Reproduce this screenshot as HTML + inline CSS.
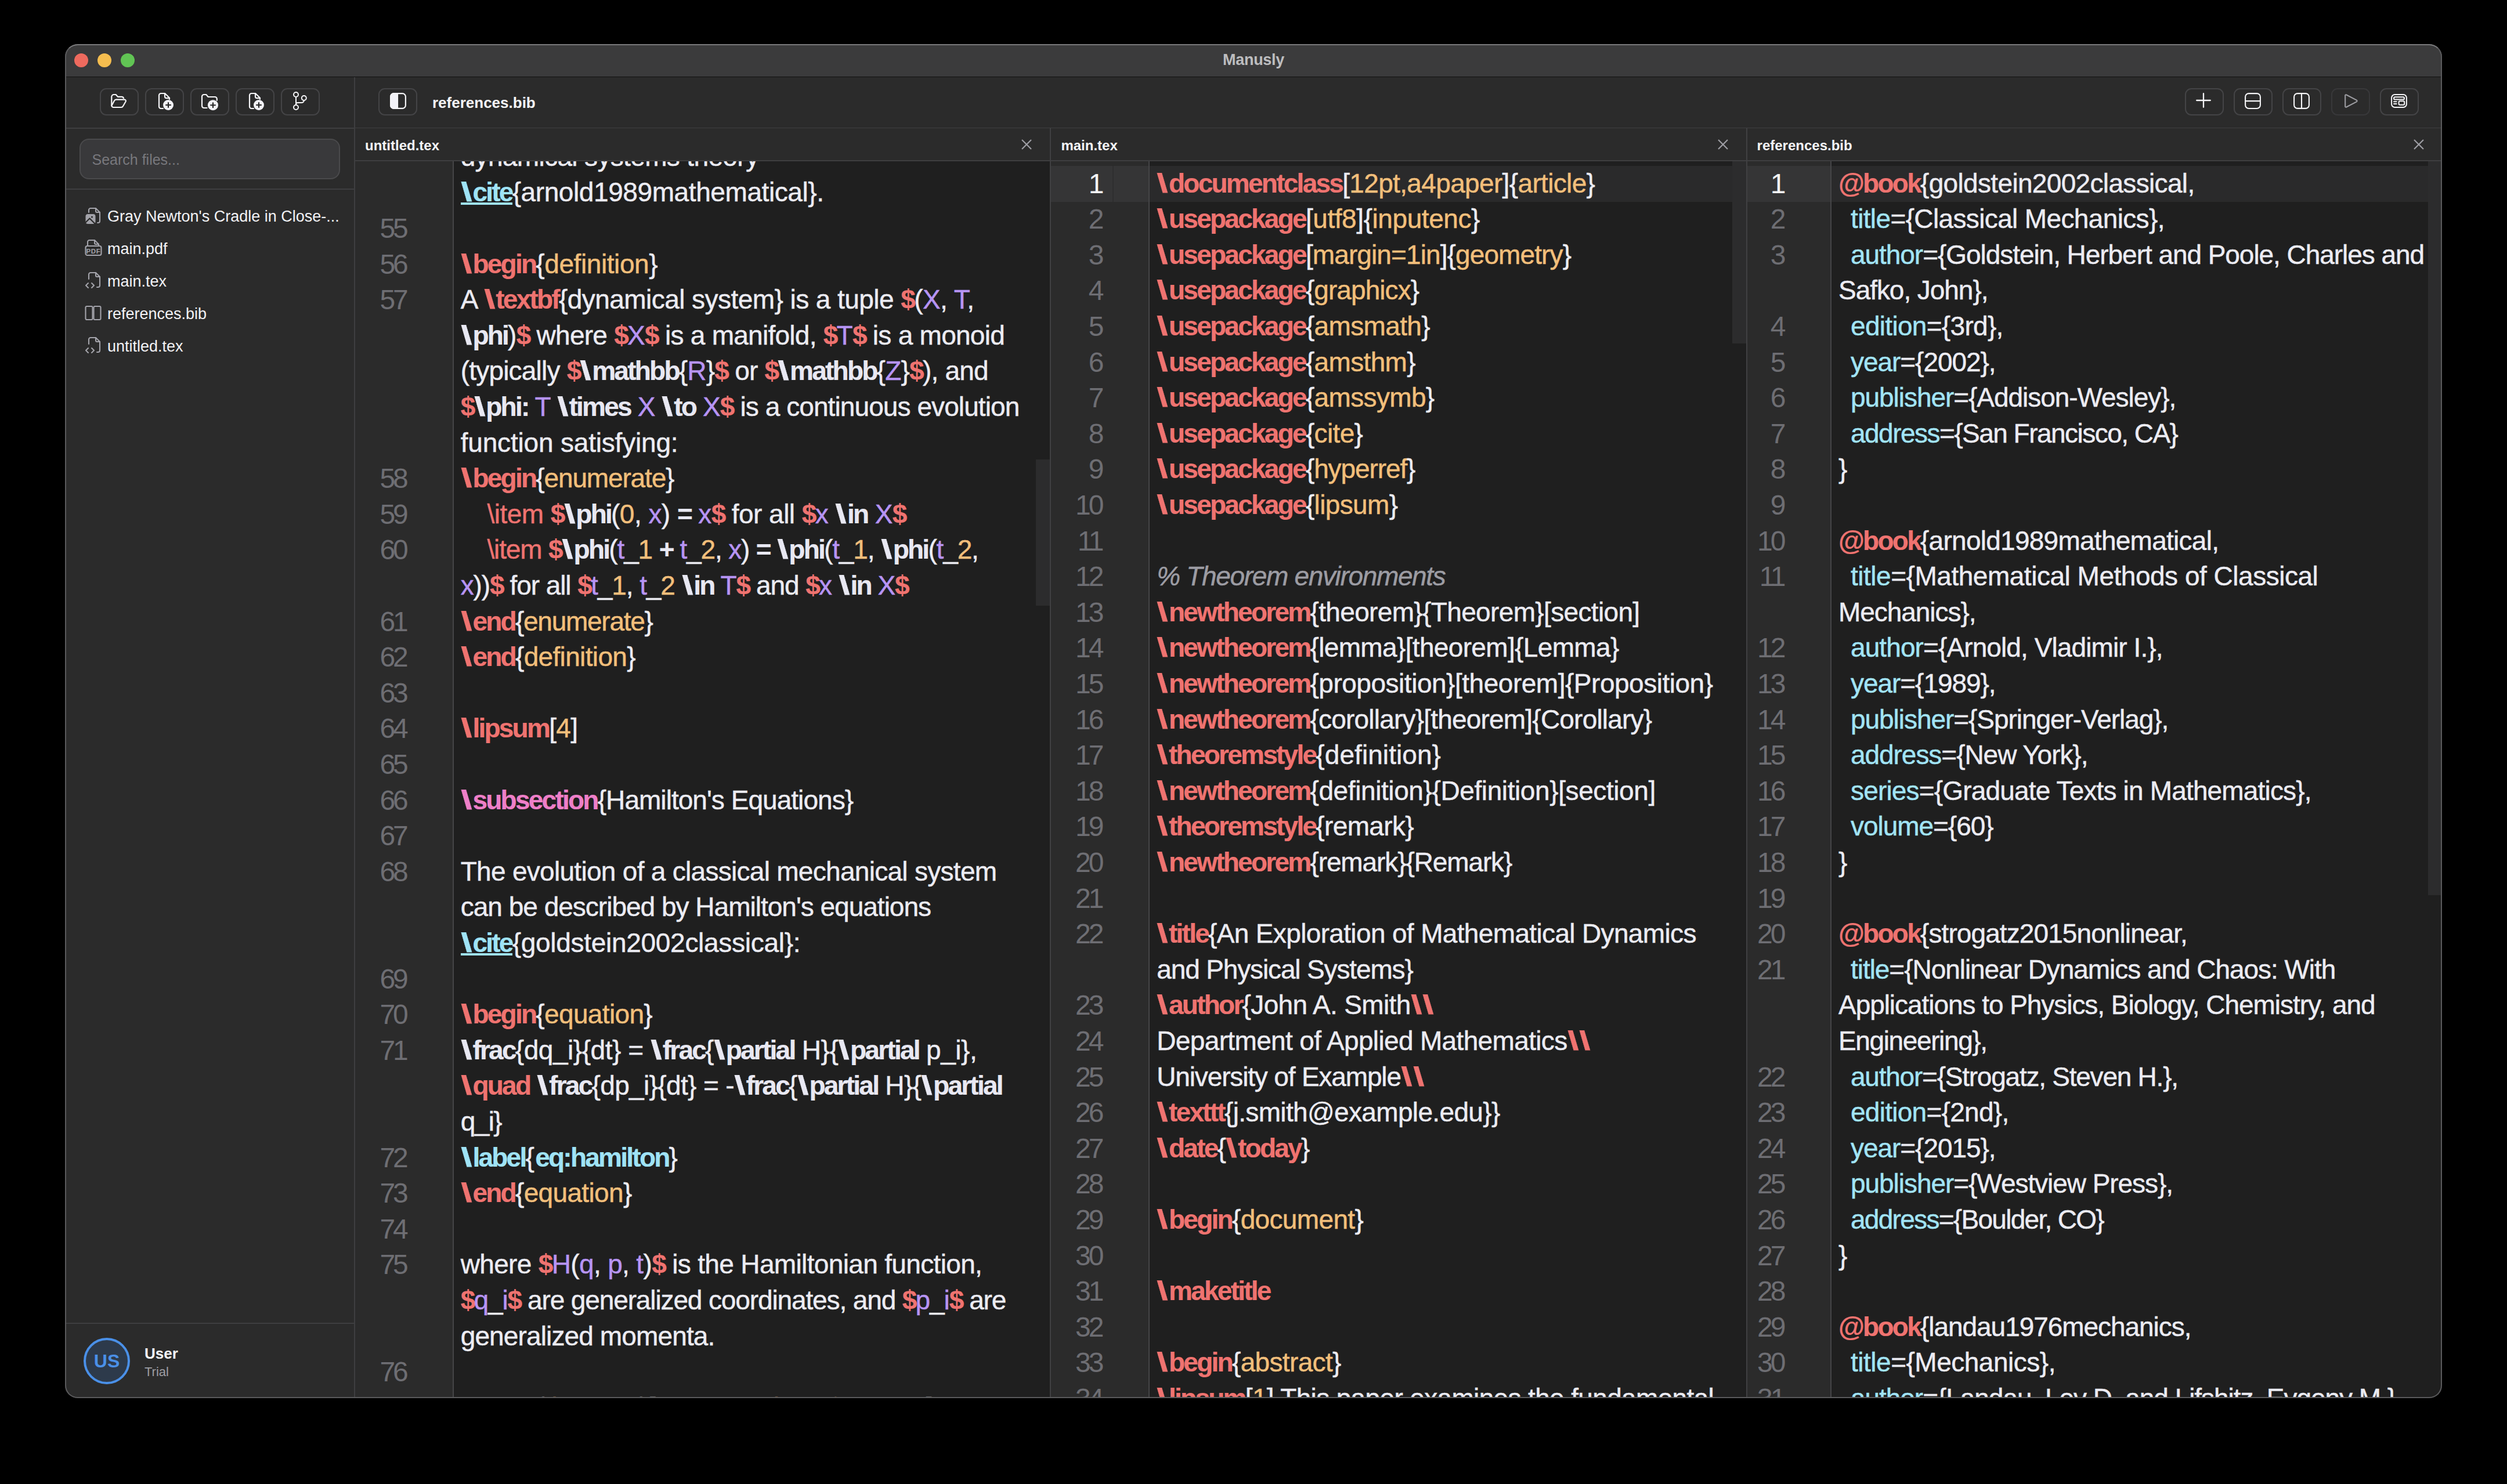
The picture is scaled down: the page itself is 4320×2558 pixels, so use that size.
<!DOCTYPE html>
<html><head><meta charset="utf-8"><title>Manusly</title>
<style>
*{box-sizing:border-box;margin:0;padding:0}
html,body{width:4320px;height:2558px;background:#000;overflow:hidden;font-family:"Liberation Sans",sans-serif}
#win{position:absolute;left:112px;top:76px;width:4096px;height:2334px;border-radius:22px;overflow:hidden;background:#2b2b2b}
#winborder{position:absolute;left:112px;top:76px;width:4096px;height:2334px;border-radius:22px;border:2px solid #5a5a5c;border-top-color:#7a7a7c;pointer-events:none;z-index:10}
.titlebar{position:absolute;left:0;top:0;width:4096px;height:56.8px;background:#3b3b3c;border-bottom:1.5px solid #111;z-index:5}
.tl{position:absolute;top:16px;width:24px;height:24px;border-radius:50%}
.apptitle{position:absolute;left:0;width:4096px;top:11.5px;text-align:center;font-size:27px;letter-spacing:-0.3px;font-weight:bold;color:#bdbdbf;line-height:30px}
.sidebar{position:absolute;left:0;top:56px;width:500px;height:2278px;background:#2b2b2b;border-right:2px solid #3e3e40}
.hline{position:absolute;height:2px;background:#3e3e40}
.btn{position:absolute;width:67px;height:47px;border:2px solid #444446;border-radius:11px}
.btn.dim{border-color:#38383a}
.search{position:absolute;left:25px;top:107px;width:449px;height:70px;border-radius:16px;background:#39393b;border:2px solid #4a4a4c;font-size:25px;color:#78787d;padding-left:19.5px;line-height:69.5px}
.file{position:absolute;left:34px;height:32px;width:440px}
.file span{position:absolute;left:39px;top:0;font-size:27px;color:#f2f2f5;line-height:32px;white-space:pre}
.avatar{position:absolute;left:32px;top:2174px;width:80px;height:80px;border-radius:50%;border:4px solid #4a90e8;background:#2d3a4b;color:#4a90e8;font-weight:bold;font-size:32px;text-align:center;line-height:72px}
.uname{position:absolute;left:137px;font-weight:bold;font-size:26px;color:#f5f5f7;line-height:30px}
.utrial{position:absolute;left:137px;font-size:22px;color:#9d9da3;line-height:25px}
.main{position:absolute;left:500px;top:56px;width:3596px;height:2277px}
.maintitle{position:absolute;left:133px;top:29.5px;font-size:26px;font-weight:bold;color:#f5f5f7;line-height:30px}
.pane{position:absolute;top:145px;height:2189px}
.tabbar{position:absolute;left:0;top:0;width:100%;height:57px;background:#2b2b2b;border-bottom:2px solid #3e3e40}
.tabtitle{position:absolute;top:14.5px;font-size:24px;font-weight:bold;color:#f5f5f7;line-height:30px}
.close{position:absolute;top:18px}
.editor{position:absolute;left:0;top:57px;width:100%;height:2132px;background:#1f1f1f;overflow:hidden}
.gutter{position:absolute;left:0;top:0;height:100%;background:#2b2b2b}
.gborder{position:absolute;top:0;width:1.5px;height:100%;background:#454547}
.hl-g{position:absolute;left:0;height:62px;background:#353536}
.hl-c{position:absolute;height:62px;background:#2a2a2b}
.thumb{position:absolute;background:#2c2c2d}
.num{position:absolute;font-size:48px;line-height:61.6px;color:#6e6e73;letter-spacing:-4px;text-align:right;white-space:pre}
.num.act{color:#f5f5f7}
.ln{position:absolute;font-size:46px;line-height:61.6px;white-space:pre;color:#ececf3;letter-spacing:-0.65px}
.p3 .ln{letter-spacing:-1.05px}
.ln span{-webkit-text-stroke:0.45px currentColor}
.ln .c,.ln .wb,.ln .cy,.ln .cyu,.ln .pk{-webkit-text-stroke:0.2px currentColor}
.ln .c{color:#ef7370;font-weight:bold;letter-spacing:-2.75px}
.ln .cr{color:#ef7370}
.ln .a{color:#f2bf7b}
.ln .w{color:#ececf3}
.ln .wb{color:#e8e8f2;font-weight:bold;letter-spacing:-2.75px}
.ln .p{color:#b794f4}
.ln .cy{color:#9fe3f6;font-weight:bold;letter-spacing:-2.75px}
.ln .cyu{color:#9fe3f6;font-weight:bold;letter-spacing:-2.75px;background:linear-gradient(#9fe3f6,#9fe3f6) no-repeat;background-size:100% 4px;background-position:0 calc(100% - 4px)}
.ln .cyr{color:#a2e4f6}
.ln .pk{color:#ee7fc8;font-weight:bold;letter-spacing:-2.75px}
.ln .cm{color:#9c9ca3;font-style:italic}
.ln .ind4{display:inline-block;width:45.8px}
.ln i.bs{display:inline-block;font-style:normal;transform:scaleX(1.55);transform-origin:0 0;width:20.7px;letter-spacing:0}
.ln .ind2{display:inline-block;width:21px}
.sep{position:absolute;top:145px;width:2px;height:2189px;background:#404042}
</style></head><body>
<div id="win">
<div class="titlebar"><div class="tl" style="left:16px;background:#ee6a5e"></div><div class="tl" style="left:56px;background:#f5bd4f"></div><div class="tl" style="left:96px;background:#61c454"></div><div class="apptitle">Manusly</div></div><div class="sidebar"><div class="btn" style="left:59.5px;top:20.0px"></div><div class="btn" style="left:137.5px;top:20.0px"></div><div class="btn" style="left:215.5px;top:20.0px"></div><div class="btn" style="left:293.5px;top:20.0px"></div><div class="btn" style="left:371.5px;top:20.0px"></div><div class="hline" style="left:0;top:88px;width:500px"></div><div class="search">Search files...</div><div class="hline" style="left:0;top:193px;width:500px"></div><div class="file" style="top:225.0px"><svg width="32" height="32" viewBox="0 0 32 32" style="position:absolute;left:0.0px;top:-1.5px" fill="none" stroke="#a3a3aa" stroke-width="2.1" stroke-linecap="round" stroke-linejoin="round"><path d="M7 10V6a3 3 0 0 1 3-3h9l7 7v15a3 3 0 0 1-3 3h-1"/><path d="M19 3v5a2 2 0 0 0 2 2h5"/><rect x="1.5" y="13" width="17" height="17" rx="4" fill="#a3a3aa" stroke="none"/><path d="M1 28l7.5-7.5 9 9" stroke="#2b2b2b" stroke-width="2.2"/><circle cx="12.5" cy="18" r="1.6" fill="#2b2b2b" stroke="none"/></svg><span>Gray Newton&#x27;s Cradle in Close-...</span></div><div class="file" style="top:280.9px"><svg width="32" height="32" viewBox="0 0 32 32" style="position:absolute;left:0.0px;top:-1.5px" fill="none" stroke="#a3a3aa" stroke-width="2.1" stroke-linecap="round" stroke-linejoin="round"><path d="M5 13V6a3 3 0 0 1 3-3h9l7 7v3"/><path d="M17 3v5a2 2 0 0 0 2 2h5"/><rect x="1.5" y="13" width="27" height="16" rx="3"/><text x="15" y="25.5" font-family="Liberation Sans" font-weight="bold" font-size="11.5" fill="#a3a3aa" stroke="none" text-anchor="middle" letter-spacing="0.6">PDF</text></svg><span>main.pdf</span></div><div class="file" style="top:336.8px"><svg width="32" height="32" viewBox="0 0 32 32" style="position:absolute;left:0.0px;top:-1.5px" fill="none" stroke="#a3a3aa" stroke-width="2.1" stroke-linecap="round" stroke-linejoin="round"><path d="M7 14V6a3 3 0 0 1 3-3h9l7 7v15a3 3 0 0 1-3 3h-2"/><path d="M19 3v5a2 2 0 0 0 2 2h5"/><path d="M6 21l-4 4 4 4M12 21l4 4-4 4"/></svg><span>main.tex</span></div><div class="file" style="top:392.7px"><svg width="32" height="32" viewBox="0 0 32 32" style="position:absolute;left:0.0px;top:-1.5px" fill="none" stroke="#a3a3aa" stroke-width="2.1" stroke-linecap="round" stroke-linejoin="round"><rect x="1.5" y="5" width="12" height="23" rx="2"/><rect x="15.5" y="5" width="12" height="23" rx="2"/></svg><span>references.bib</span></div><div class="file" style="top:448.6px"><svg width="32" height="32" viewBox="0 0 32 32" style="position:absolute;left:0.0px;top:-1.5px" fill="none" stroke="#a3a3aa" stroke-width="2.1" stroke-linecap="round" stroke-linejoin="round"><path d="M7 14V6a3 3 0 0 1 3-3h9l7 7v15a3 3 0 0 1-3 3h-2"/><path d="M19 3v5a2 2 0 0 0 2 2h5"/><path d="M6 21l-4 4 4 4M12 21l4 4-4 4"/></svg><span>untitled.tex</span></div><div class="hline" style="left:0;top:2148px;width:500px"></div><div class="avatar">US</div><div class="uname" style="top:2186px">User</div><div class="utrial" style="top:2219.5px">Trial</div></div><div class="main"><div class="btn" style="left:40.2px;top:20.0px"></div><div class="maintitle">references.bib</div><div class="btn" style="left:3152.6px;top:20.0px"></div><div class="btn" style="left:3236.6px;top:20.0px"></div><div class="btn" style="left:3320.6px;top:20.0px"></div><div class="btn dim" style="left:3404.6px;top:20.0px"></div><div class="btn" style="left:3488.6px;top:20.0px"></div><div class="hline" style="left:0;top:88px;width:3596px"></div></div><svg width="30" height="28" viewBox="0 0 30 28" style="position:absolute;left:78.00px;top:84.00px" fill="none" stroke="#f5f5f7" stroke-width="2.20" stroke-linecap="round" stroke-linejoin="round"><path d="M2.3 21.5V7A4 4 0 0 1 6.3 3H9.6L13 6.8H19.8A3.4 3.4 0 0 1 23 9.2"/><path d="M2.6 21.8L7 13.6A3.6 3.6 0 0 1 10.2 11.6H24.6A2.3 2.3 0 0 1 26.6 15L22 23A3.6 3.6 0 0 1 18.9 25H5.6A3.3 3.3 0 0 1 2.3 21.7"/></svg><svg width="30" height="32" viewBox="0 0 30 32" style="position:absolute;left:160.00px;top:83.00px" fill="none" stroke="#f5f5f7" stroke-width="2.20" stroke-linecap="round" stroke-linejoin="round"><path d="M9 28H5.2A3.2 3.2 0 0 1 2 24.8V5.2A3.2 3.2 0 0 1 5.2 2H12.2L20 9.8V12"/><path d="M12 2.2V7.6A2.6 2.6 0 0 0 14.6 10.2H20"/><circle cx="18" cy="22" r="9" fill="#f2f2f7" stroke="none"/><path d="M18 17.2V26.8M13.2 22H22.8" stroke="#232323" stroke-width="2.1" stroke-linecap="butt"/></svg><svg width="32" height="32" viewBox="0 0 32 32" style="position:absolute;left:234.00px;top:84.00px" fill="none" stroke="#f5f5f7" stroke-width="2.20" stroke-linecap="round" stroke-linejoin="round"><path d="M10.5 26H5.5A3.5 3.5 0 0 1 2 22.5V6.5A3.5 3.5 0 0 1 5.5 3H9.2L12.7 7H24.3A3.5 3.5 0 0 1 27.8 10.5V13"/><circle cx="21" cy="21.2" r="9" fill="#f2f2f7" stroke="none"/><path d="M21 16.4V26M16.2 21.2H25.8" stroke="#232323" stroke-width="2.1" stroke-linecap="butt"/></svg><svg width="30" height="32" viewBox="0 0 30 32" style="position:absolute;left:316.00px;top:83.00px" fill="none" stroke="#f5f5f7" stroke-width="2.20" stroke-linecap="round" stroke-linejoin="round"><path d="M9 28H5.2A3.2 3.2 0 0 1 2 24.8V5.2A3.2 3.2 0 0 1 5.2 2H12.2L20 9.8V12"/><path d="M12 2.2V7.6A2.6 2.6 0 0 0 14.6 10.2H20"/><circle cx="18" cy="22" r="9" fill="#f2f2f7" stroke="none"/><path d="M18 17.2V26.8M13.2 22H22.8" stroke="#232323" stroke-width="2.1" stroke-linecap="butt"/></svg><svg width="30" height="34" viewBox="0 0 30 34" style="position:absolute;left:388.00px;top:82.00px" fill="none" stroke="#f5f5f7" stroke-width="2.00" stroke-linecap="round" stroke-linejoin="round"><circle cx="10" cy="5" r="4"/><circle cx="10" cy="27" r="4"/><circle cx="23.8" cy="11" r="4"/><path d="M10 9V23"/><path d="M10 21.5C10 19.8 11.2 19 13 19H19.5C21.8 19 23.8 17.5 23.8 15"/></svg><svg width="30" height="30" viewBox="0 0 30 30" style="position:absolute;left:560.00px;top:84.00px" fill="none" stroke="#f5f5f7" stroke-width="2.20" stroke-linecap="round" stroke-linejoin="round"><rect x="1.1" y="1.1" width="25.8" height="25.8" rx="5.5"/><path d="M6.6 1.1H13V26.9H6.6A5.5 5.5 0 0 1 1.1 21.4V6.6A5.5 5.5 0 0 1 6.6 1.1Z" fill="#f2f2f7"/></svg><svg width="28" height="28" viewBox="0 0 28 28" style="position:absolute;left:3671.60px;top:83.60px" fill="none" stroke="#f5f5f7" stroke-width="2.30" stroke-linecap="round" stroke-linejoin="round"><path d="M13 1.2V24.8M1.2 13H24.8"/></svg><svg width="30" height="30" viewBox="0 0 30 30" style="position:absolute;left:3756.00px;top:84.00px" fill="none" stroke="#f5f5f7" stroke-width="2.10" stroke-linecap="round" stroke-linejoin="round"><rect x="1.1" y="1.1" width="25.8" height="25.9" rx="6"/><path d="M1.1 14.1H26.9"/></svg><svg width="30" height="30" viewBox="0 0 30 30" style="position:absolute;left:3840.00px;top:84.00px" fill="none" stroke="#f5f5f7" stroke-width="2.10" stroke-linecap="round" stroke-linejoin="round"><rect x="1.1" y="1.1" width="25.8" height="25.8" rx="6"/><path d="M14 1.1V26.9"/></svg><svg width="26" height="26" viewBox="0 0 26 26" style="position:absolute;left:3928.00px;top:86.00px" fill="none" stroke="#9c9ca1" stroke-width="2.10" stroke-linecap="round" stroke-linejoin="round"><path d="M3.3 1.5L20.8 10.6A1.6 1.6 0 0 1 20.8 13.4L3.3 22.5A1.3 1.3 0 0 1 1.2 21.4V2.6A1.3 1.3 0 0 1 3.3 1.5Z"/></svg><svg width="30" height="26" viewBox="0 0 30 26" style="position:absolute;left:4008.00px;top:86.00px" fill="none" stroke="#f5f5f7" stroke-width="2.00" stroke-linecap="round" stroke-linejoin="round"><rect x="1.1" y="1.1" width="25.8" height="21.8" rx="5.5"/><rect x="5" y="5.2" width="18" height="4.4" rx="2.2"/><path d="M5 13.2H9.6M5 17H9.6"/><rect x="13.6" y="12.2" width="9.6" height="6.6" rx="1.8"/></svg><div class="pane p1" style="left:500.0px;width:1197.0px"><div class="tabbar"><span class="tabtitle" style="left:17.0px">untitled.tex</span><svg class="close" style="left:1147.0px" width="20" height="20" viewBox="0 0 20 20"><path d="M2 2L18 18M18 2L2 18" stroke="#9d9da3" stroke-width="2.2" fill="none"/></svg></div><div class="editor"><div class="gutter" style="width:168.0px"></div><div class="gborder" style="left:168.0px"></div><div class="thumb" style="left:1173.0px;top:514.0px;height:252.0px;width:24.0px"></div><div class="ln" style="top:-38.20px;left:181.7px"><span class="w">dynamical systems theory</span></div><div class="ln" style="top:23.40px;left:181.7px;letter-spacing:-0.410px"><span class="cyu"><i class="bs">\</i>cite</span><span class="w">{arnold1989mathematical}.</span></div><div class="num" style="top:85.00px;right:1109.2px">55</div><div class="num" style="top:146.60px;right:1109.2px">56</div><div class="ln" style="top:146.60px;left:181.7px;letter-spacing:-0.417px"><span class="c"><i class="bs">\</i>begin</span><span class="w">{</span><span class="a">definition</span><span class="w">}</span></div><div class="num" style="top:208.20px;right:1109.2px">57</div><div class="ln" style="top:208.20px;left:181.7px;letter-spacing:-0.553px"><span class="w">A </span><span class="c"><i class="bs">\</i>textbf</span><span class="w">{dynamical system} is a tuple </span><span class="c">$</span><span class="w">(</span><span class="p">X</span><span class="w">, </span><span class="p">T</span><span class="w">,</span></div><div class="ln" style="top:269.80px;left:181.7px;letter-spacing:-0.734px"><span class="wb"><i class="bs">\</i>phi</span><span class="w">)</span><span class="c">$</span><span class="w"> where </span><span class="c">$</span><span class="p">X</span><span class="c">$</span><span class="w"> is a manifold, </span><span class="c">$</span><span class="p">T</span><span class="c">$</span><span class="w"> is a monoid</span></div><div class="ln" style="top:331.40px;left:181.7px;letter-spacing:-0.798px"><span class="w">(typically </span><span class="c">$</span><span class="wb"><i class="bs">\</i>mathbb</span><span class="w">{</span><span class="p">R</span><span class="w">}</span><span class="c">$</span><span class="w"> or </span><span class="c">$</span><span class="wb"><i class="bs">\</i>mathbb</span><span class="w">{</span><span class="p">Z</span><span class="w">}</span><span class="c">$</span><span class="w">), and</span></div><div class="ln" style="top:393.00px;left:181.7px;letter-spacing:-0.915px"><span class="c">$</span><span class="wb"><i class="bs">\</i>phi:</span><span class="w"> </span><span class="p">T</span><span class="w"> </span><span class="wb"><i class="bs">\</i>times</span><span class="w"> </span><span class="p">X</span><span class="w"> </span><span class="wb"><i class="bs">\</i>to</span><span class="w"> </span><span class="p">X</span><span class="c">$</span><span class="w"> is a continuous evolution</span></div><div class="ln" style="top:454.60px;left:181.7px;letter-spacing:-0.185px"><span class="w">function satisfying:</span></div><div class="num" style="top:516.20px;right:1109.2px">58</div><div class="ln" style="top:516.20px;left:181.7px;letter-spacing:-1.150px"><span class="c"><i class="bs">\</i>begin</span><span class="w">{</span><span class="a">enumerate</span><span class="w">}</span></div><div class="num" style="top:577.80px;right:1109.2px">59</div><div class="ln" style="top:577.80px;left:181.7px;letter-spacing:-0.536px"><span class="ind4"></span><span class="cr">\item</span><span class="w"> </span><span class="c">$</span><span class="wb"><i class="bs">\</i>phi</span><span class="w">(</span><span class="a">0</span><span class="w">, </span><span class="p">x</span><span class="w">) </span><span class="wb">=</span><span class="w"> </span><span class="p">x</span><span class="c">$</span><span class="w"> for all </span><span class="c">$</span><span class="p">x</span><span class="w"> </span><span class="wb"><i class="bs">\</i>in</span><span class="w"> </span><span class="p">X</span><span class="c">$</span></div><div class="num" style="top:639.40px;right:1109.2px">60</div><div class="ln" style="top:639.40px;left:181.7px;letter-spacing:-1.153px"><span class="ind4"></span><span class="cr">\item</span><span class="w"> </span><span class="c">$</span><span class="wb"><i class="bs">\</i>phi</span><span class="w">(</span><span class="p">t</span><span class="w">_</span><span class="a">1</span><span class="w"> </span><span class="wb">+</span><span class="w"> </span><span class="p">t</span><span class="w">_</span><span class="a">2</span><span class="w">, </span><span class="p">x</span><span class="w">) </span><span class="wb">=</span><span class="w"> </span><span class="wb"><i class="bs">\</i>phi</span><span class="w">(</span><span class="p">t</span><span class="w">_</span><span class="a">1</span><span class="w">, </span><span class="wb"><i class="bs">\</i>phi</span><span class="w">(</span><span class="p">t</span><span class="w">_</span><span class="a">2</span><span class="w">,</span></div><div class="ln" style="top:701.00px;left:181.7px;letter-spacing:-1.087px"><span class="p">x</span><span class="w">))</span><span class="c">$</span><span class="w"> for all </span><span class="c">$</span><span class="p">t</span><span class="w">_</span><span class="a">1</span><span class="w">, </span><span class="p">t</span><span class="w">_</span><span class="a">2</span><span class="w"> </span><span class="wb"><i class="bs">\</i>in</span><span class="w"> </span><span class="p">T</span><span class="c">$</span><span class="w"> and </span><span class="c">$</span><span class="p">x</span><span class="w"> </span><span class="wb"><i class="bs">\</i>in</span><span class="w"> </span><span class="p">X</span><span class="c">$</span></div><div class="num" style="top:762.60px;right:1109.2px">61</div><div class="ln" style="top:762.60px;left:181.7px;letter-spacing:-1.268px"><span class="c"><i class="bs">\</i>end</span><span class="w">{</span><span class="a">enumerate</span><span class="w">}</span></div><div class="num" style="top:824.20px;right:1109.2px">62</div><div class="ln" style="top:824.20px;left:181.7px"><span class="c"><i class="bs">\</i>end</span><span class="w">{</span><span class="a">definition</span><span class="w">}</span></div><div class="num" style="top:885.80px;right:1109.2px">63</div><div class="num" style="top:947.40px;right:1109.2px">64</div><div class="ln" style="top:947.40px;left:181.7px"><span class="c"><i class="bs">\</i>lipsum</span><span class="w">[</span><span class="a">4</span><span class="w">]</span></div><div class="num" style="top:1009.00px;right:1109.2px">65</div><div class="num" style="top:1070.60px;right:1109.2px">66</div><div class="ln" style="top:1070.60px;left:181.7px;letter-spacing:-0.955px"><span class="pk"><i class="bs">\</i>subsection</span><span class="w">{Hamilton&#x27;s Equations}</span></div><div class="num" style="top:1132.20px;right:1109.2px">67</div><div class="num" style="top:1193.80px;right:1109.2px">68</div><div class="ln" style="top:1193.80px;left:181.7px;letter-spacing:-0.707px"><span class="w">The evolution of a classical mechanical system</span></div><div class="ln" style="top:1255.40px;left:181.7px;letter-spacing:-0.992px"><span class="w">can be described by Hamilton&#x27;s equations</span></div><div class="ln" style="top:1317.00px;left:181.7px;letter-spacing:-0.290px"><span class="cyu"><i class="bs">\</i>cite</span><span class="w">{goldstein2002classical}:</span></div><div class="num" style="top:1378.60px;right:1109.2px">69</div><div class="num" style="top:1440.20px;right:1109.2px">70</div><div class="ln" style="top:1440.20px;left:181.7px"><span class="c"><i class="bs">\</i>begin</span><span class="w">{</span><span class="a">equation</span><span class="w">}</span></div><div class="num" style="top:1501.80px;right:1109.2px">71</div><div class="ln" style="top:1501.80px;left:181.7px;letter-spacing:-0.463px"><span class="wb"><i class="bs">\</i>frac</span><span class="w">{dq_i}{dt} = </span><span class="wb"><i class="bs">\</i>frac</span><span class="w">{</span><span class="wb"><i class="bs">\</i>partial</span><span class="w"> H}{</span><span class="wb"><i class="bs">\</i>partial</span><span class="w"> p_i},</span></div><div class="ln" style="top:1563.40px;left:181.7px"><span class="c"><i class="bs">\</i>quad</span><span class="w"> </span><span class="wb"><i class="bs">\</i>frac</span><span class="w">{dp_i}{dt} = -</span><span class="wb"><i class="bs">\</i>frac</span><span class="w">{</span><span class="wb"><i class="bs">\</i>partial</span><span class="w"> H}{</span><span class="wb"><i class="bs">\</i>partial</span></div><div class="ln" style="top:1625.00px;left:181.7px;letter-spacing:-1.575px"><span class="w">q_i}</span></div><div class="num" style="top:1686.60px;right:1109.2px">72</div><div class="ln" style="top:1686.60px;left:181.7px;letter-spacing:1.350px"><span class="cy"><i class="bs">\</i>label</span><span class="w">{</span><span class="cy">eq:hamilton</span><span class="w">}</span></div><div class="num" style="top:1748.20px;right:1109.2px">73</div><div class="ln" style="top:1748.20px;left:181.7px"><span class="c"><i class="bs">\</i>end</span><span class="w">{</span><span class="a">equation</span><span class="w">}</span></div><div class="num" style="top:1809.80px;right:1109.2px">74</div><div class="num" style="top:1871.40px;right:1109.2px">75</div><div class="ln" style="top:1871.40px;left:181.7px"><span class="w">where </span><span class="c">$</span><span class="p">H</span><span class="w">(</span><span class="p">q</span><span class="w">, </span><span class="p">p</span><span class="w">, </span><span class="p">t</span><span class="w">)</span><span class="c">$</span><span class="w"> is the Hamiltonian function,</span></div><div class="ln" style="top:1933.00px;left:181.7px;letter-spacing:-1.125px"><span class="c">$</span><span class="p">q</span><span class="w">_</span><span class="p">i</span><span class="c">$</span><span class="w"> are generalized coordinates, and </span><span class="c">$</span><span class="p">p</span><span class="w">_</span><span class="p">i</span><span class="c">$</span><span class="w"> are</span></div><div class="ln" style="top:1994.60px;left:181.7px;letter-spacing:-0.870px"><span class="w">generalized momenta.</span></div><div class="num" style="top:2056.20px;right:1109.2px">76</div><div class="num" style="top:2117.80px;right:1109.2px">77</div><div class="ln" style="top:2117.80px;left:181.7px"><span class="c"><i class="bs">\</i>begin</span><span class="w">{</span><span class="a">theorem</span><span class="w">}[</span><span class="a">Conservation of Energy</span><span class="w">]</span></div></div></div><div class="sep" style="left:1697px"></div><div class="pane p2" style="left:1699.0px;width:1198.0px"><div class="tabbar"><span class="tabtitle" style="left:17.4px">main.tex</span><svg class="close" style="left:1147.7px" width="20" height="20" viewBox="0 0 20 20"><path d="M2 2L18 18M18 2L2 18" stroke="#9d9da3" stroke-width="2.2" fill="none"/></svg></div><div class="editor"><div class="gutter" style="width:168.0px"></div><div class="gborder" style="left:168.0px"></div><div class="hl-g" style="top:7.80px;width:168.0px"></div><div class="hl-c" style="top:7.80px;left:169.5px;width:1004.5px"></div><div class="thumb" style="left:1174.0px;top:0.0px;height:314.0px;width:24.0px"></div><div class="num act" style="top:7.50px;right:1110.5px">1</div><div class="ln" style="top:7.50px;left:182.3px"><span class="c"><i class="bs">\</i>documentclass</span><span class="w">[</span><span class="a">12pt,a4paper</span><span class="w">]{</span><span class="a">article</span><span class="w">}</span></div><div class="num" style="top:69.10px;right:1110.5px">2</div><div class="ln" style="top:69.10px;left:182.3px;letter-spacing:-0.425px"><span class="c"><i class="bs">\</i>usepackage</span><span class="w">[</span><span class="a">utf8</span><span class="w">]</span><span class="w">{</span><span class="a">inputenc</span><span class="w">}</span></div><div class="num" style="top:130.70px;right:1110.5px">3</div><div class="ln" style="top:130.70px;left:182.3px;letter-spacing:-0.895px"><span class="c"><i class="bs">\</i>usepackage</span><span class="w">[</span><span class="a">margin=1in</span><span class="w">]</span><span class="w">{</span><span class="a">geometry</span><span class="w">}</span></div><div class="num" style="top:192.30px;right:1110.5px">4</div><div class="ln" style="top:192.30px;left:182.3px;letter-spacing:-0.930px"><span class="c"><i class="bs">\</i>usepackage</span><span class="w">{</span><span class="a">graphicx</span><span class="w">}</span></div><div class="num" style="top:253.90px;right:1110.5px">5</div><div class="ln" style="top:253.90px;left:182.3px"><span class="c"><i class="bs">\</i>usepackage</span><span class="w">{</span><span class="a">amsmath</span><span class="w">}</span></div><div class="num" style="top:315.50px;right:1110.5px">6</div><div class="ln" style="top:315.50px;left:182.3px"><span class="c"><i class="bs">\</i>usepackage</span><span class="w">{</span><span class="a">amsthm</span><span class="w">}</span></div><div class="num" style="top:377.10px;right:1110.5px">7</div><div class="ln" style="top:377.10px;left:182.3px"><span class="c"><i class="bs">\</i>usepackage</span><span class="w">{</span><span class="a">amssymb</span><span class="w">}</span></div><div class="num" style="top:438.70px;right:1110.5px">8</div><div class="ln" style="top:438.70px;left:182.3px"><span class="c"><i class="bs">\</i>usepackage</span><span class="w">{</span><span class="a">cite</span><span class="w">}</span></div><div class="num" style="top:500.30px;right:1110.5px">9</div><div class="ln" style="top:500.30px;left:182.3px;letter-spacing:-1.100px"><span class="c"><i class="bs">\</i>usepackage</span><span class="w">{</span><span class="a">hyperref</span><span class="w">}</span></div><div class="num" style="top:561.90px;right:1110.5px">10</div><div class="ln" style="top:561.90px;left:182.3px"><span class="c"><i class="bs">\</i>usepackage</span><span class="w">{</span><span class="a">lipsum</span><span class="w">}</span></div><div class="num" style="top:623.50px;right:1110.5px">11</div><div class="num" style="top:685.10px;right:1110.5px">12</div><div class="ln" style="top:685.10px;left:182.3px;letter-spacing:-1.341px"><span class="cm">% Theorem environments</span></div><div class="num" style="top:746.70px;right:1110.5px">13</div><div class="ln" style="top:746.70px;left:182.3px"><span class="c"><i class="bs">\</i>newtheorem</span><span class="w">{theorem}{Theorem}[section]</span></div><div class="num" style="top:808.30px;right:1110.5px">14</div><div class="ln" style="top:808.30px;left:182.3px"><span class="c"><i class="bs">\</i>newtheorem</span><span class="w">{lemma}[theorem]{Lemma}</span></div><div class="num" style="top:869.90px;right:1110.5px">15</div><div class="ln" style="top:869.90px;left:182.3px;letter-spacing:-0.479px"><span class="c"><i class="bs">\</i>newtheorem</span><span class="w">{proposition}[theorem]{Proposition}</span></div><div class="num" style="top:931.50px;right:1110.5px">16</div><div class="ln" style="top:931.50px;left:182.3px;letter-spacing:-0.798px"><span class="c"><i class="bs">\</i>newtheorem</span><span class="w">{corollary}[theorem]{Corollary}</span></div><div class="num" style="top:993.10px;right:1110.5px">17</div><div class="ln" style="top:993.10px;left:182.3px;letter-spacing:0.067px"><span class="c"><i class="bs">\</i>theoremstyle</span><span class="w">{definition}</span></div><div class="num" style="top:1054.70px;right:1110.5px">18</div><div class="ln" style="top:1054.70px;left:182.3px;letter-spacing:-0.402px"><span class="c"><i class="bs">\</i>newtheorem</span><span class="w">{definition}{Definition}[section]</span></div><div class="num" style="top:1116.30px;right:1110.5px">19</div><div class="ln" style="top:1116.30px;left:182.3px"><span class="c"><i class="bs">\</i>theoremstyle</span><span class="w">{remark}</span></div><div class="num" style="top:1177.90px;right:1110.5px">20</div><div class="ln" style="top:1177.90px;left:182.3px;letter-spacing:-1.113px"><span class="c"><i class="bs">\</i>newtheorem</span><span class="w">{remark}{Remark}</span></div><div class="num" style="top:1239.50px;right:1110.5px">21</div><div class="num" style="top:1301.10px;right:1110.5px">22</div><div class="ln" style="top:1301.10px;left:182.3px"><span class="c"><i class="bs">\</i>title</span><span class="w">{An Exploration of Mathematical Dynamics</span></div><div class="ln" style="top:1362.70px;left:182.3px;letter-spacing:-1.140px"><span class="w">and Physical Systems}</span></div><div class="num" style="top:1424.30px;right:1110.5px">23</div><div class="ln" style="top:1424.30px;left:182.3px"><span class="c"><i class="bs">\</i>author</span><span class="w">{John A. Smith</span><span class="c"><i class="bs">\</i><i class="bs">\</i></span></div><div class="num" style="top:1485.90px;right:1110.5px">24</div><div class="ln" style="top:1485.90px;left:182.3px"><span class="w">Department of Applied Mathematics</span><span class="c"><i class="bs">\</i><i class="bs">\</i></span></div><div class="num" style="top:1547.50px;right:1110.5px">25</div><div class="ln" style="top:1547.50px;left:182.3px;letter-spacing:-1.155px"><span class="w">University of Example</span><span class="c"><i class="bs">\</i><i class="bs">\</i></span></div><div class="num" style="top:1609.10px;right:1110.5px">26</div><div class="ln" style="top:1609.10px;left:182.3px"><span class="c"><i class="bs">\</i>texttt</span><span class="w">{j.smith@example.edu}}</span></div><div class="num" style="top:1670.70px;right:1110.5px">27</div><div class="ln" style="top:1670.70px;left:182.3px"><span class="c"><i class="bs">\</i>date</span><span class="w">{</span><span class="c"><i class="bs">\</i>today</span><span class="w">}</span></div><div class="num" style="top:1732.30px;right:1110.5px">28</div><div class="num" style="top:1793.90px;right:1110.5px">29</div><div class="ln" style="top:1793.90px;left:182.3px"><span class="c"><i class="bs">\</i>begin</span><span class="w">{</span><span class="a">document</span><span class="w">}</span></div><div class="num" style="top:1855.50px;right:1110.5px">30</div><div class="num" style="top:1917.10px;right:1110.5px">31</div><div class="ln" style="top:1917.10px;left:182.3px;letter-spacing:1.350px"><span class="c"><i class="bs">\</i>maketitle</span></div><div class="num" style="top:1978.70px;right:1110.5px">32</div><div class="num" style="top:2040.30px;right:1110.5px">33</div><div class="ln" style="top:2040.30px;left:182.3px"><span class="c"><i class="bs">\</i>begin</span><span class="w">{</span><span class="a">abstract</span><span class="w">}</span></div><div class="num" style="top:2101.90px;right:1110.5px">34</div><div class="ln" style="top:2101.90px;left:182.3px"><span class="c"><i class="bs">\</i>lipsum</span><span class="w">[</span><span class="a">1</span><span class="w">] This paper examines the fundamental</span></div></div></div><div style="position:absolute;left:1805.0px;top:209.80px;width:1.5px;height:62px;background:#2e2e2f;z-index:3"></div><div class="sep" style="left:2897px"></div><div class="pane p3" style="left:2899.0px;width:1197.0px"><div class="tabbar"><span class="tabtitle" style="left:16.6px">references.bib</span><svg class="close" style="left:1147.0px" width="20" height="20" viewBox="0 0 20 20"><path d="M2 2L18 18M18 2L2 18" stroke="#9d9da3" stroke-width="2.2" fill="none"/></svg></div><div class="editor"><div class="gutter" style="width:143.0px"></div><div class="gborder" style="left:143.0px"></div><div class="hl-g" style="top:7.80px;width:143.0px"></div><div class="hl-c" style="top:7.80px;left:144.5px;width:1028.5px"></div><div class="thumb" style="left:1173.0px;top:0.0px;height:1265.0px;width:24.0px"></div><div class="num act" style="top:7.50px;right:1134.5px">1</div><div class="ln" style="top:7.50px;left:157.0px;letter-spacing:-0.663px"><span class="c">@book</span><span class="w">{goldstein2002classical,</span></div><div class="num" style="top:69.10px;right:1134.5px">2</div><div class="ln" style="top:69.10px;left:157.0px;letter-spacing:-0.636px"><span class="ind2"></span><span class="cyr">title</span><span class="w">={Classical Mechanics},</span></div><div class="num" style="top:130.70px;right:1134.5px">3</div><div class="ln" style="top:130.70px;left:157.0px"><span class="ind2"></span><span class="cyr">author</span><span class="w">={Goldstein, Herbert and Poole, Charles and</span></div><div class="ln" style="top:192.30px;left:157.0px"><span class="w">Safko, John},</span></div><div class="num" style="top:253.90px;right:1134.5px">4</div><div class="ln" style="top:253.90px;left:157.0px;letter-spacing:-0.693px"><span class="ind2"></span><span class="cyr">edition</span><span class="w">={3rd},</span></div><div class="num" style="top:315.50px;right:1134.5px">5</div><div class="ln" style="top:315.50px;left:157.0px"><span class="ind2"></span><span class="cyr">year</span><span class="w">={2002},</span></div><div class="num" style="top:377.10px;right:1134.5px">6</div><div class="ln" style="top:377.10px;left:157.0px"><span class="ind2"></span><span class="cyr">publisher</span><span class="w">={Addison-Wesley},</span></div><div class="num" style="top:438.70px;right:1134.5px">7</div><div class="ln" style="top:438.70px;left:157.0px;letter-spacing:-1.531px"><span class="ind2"></span><span class="cyr">address</span><span class="w">={San Francisco, CA}</span></div><div class="num" style="top:500.30px;right:1134.5px">8</div><div class="ln" style="top:500.30px;left:157.0px"><span class="w">}</span></div><div class="num" style="top:561.90px;right:1134.5px">9</div><div class="num" style="top:623.50px;right:1134.5px">10</div><div class="ln" style="top:623.50px;left:157.0px;letter-spacing:-0.738px"><span class="c">@book</span><span class="w">{arnold1989mathematical,</span></div><div class="num" style="top:685.10px;right:1134.5px">11</div><div class="ln" style="top:685.10px;left:157.0px;letter-spacing:-0.480px"><span class="ind2"></span><span class="cyr">title</span><span class="w">={Mathematical Methods of Classical</span></div><div class="ln" style="top:746.70px;left:157.0px"><span class="w">Mechanics},</span></div><div class="num" style="top:808.30px;right:1134.5px">12</div><div class="ln" style="top:808.30px;left:157.0px;letter-spacing:-0.902px"><span class="ind2"></span><span class="cyr">author</span><span class="w">={Arnold, Vladimir I.},</span></div><div class="num" style="top:869.90px;right:1134.5px">13</div><div class="ln" style="top:869.90px;left:157.0px"><span class="ind2"></span><span class="cyr">year</span><span class="w">={1989},</span></div><div class="num" style="top:931.50px;right:1134.5px">14</div><div class="ln" style="top:931.50px;left:157.0px"><span class="ind2"></span><span class="cyr">publisher</span><span class="w">={Springer-Verlag},</span></div><div class="num" style="top:993.10px;right:1134.5px">15</div><div class="ln" style="top:993.10px;left:157.0px"><span class="ind2"></span><span class="cyr">address</span><span class="w">={New York},</span></div><div class="num" style="top:1054.70px;right:1134.5px">16</div><div class="ln" style="top:1054.70px;left:157.0px;letter-spacing:-0.835px"><span class="ind2"></span><span class="cyr">series</span><span class="w">={Graduate Texts in Mathematics},</span></div><div class="num" style="top:1116.30px;right:1134.5px">17</div><div class="ln" style="top:1116.30px;left:157.0px"><span class="ind2"></span><span class="cyr">volume</span><span class="w">={60}</span></div><div class="num" style="top:1177.90px;right:1134.5px">18</div><div class="ln" style="top:1177.90px;left:157.0px"><span class="w">}</span></div><div class="num" style="top:1239.50px;right:1134.5px">19</div><div class="num" style="top:1301.10px;right:1134.5px">20</div><div class="ln" style="top:1301.10px;left:157.0px;letter-spacing:-0.907px"><span class="c">@book</span><span class="w">{strogatz2015nonlinear,</span></div><div class="num" style="top:1362.70px;right:1134.5px">21</div><div class="ln" style="top:1362.70px;left:157.0px"><span class="ind2"></span><span class="cyr">title</span><span class="w">={Nonlinear Dynamics and Chaos: With</span></div><div class="ln" style="top:1424.30px;left:157.0px"><span class="w">Applications to Physics, Biology, Chemistry, and</span></div><div class="ln" style="top:1485.90px;left:157.0px;letter-spacing:-1.381px"><span class="w">Engineering},</span></div><div class="num" style="top:1547.50px;right:1134.5px">22</div><div class="ln" style="top:1547.50px;left:157.0px;letter-spacing:-1.236px"><span class="ind2"></span><span class="cyr">author</span><span class="w">={Strogatz, Steven H.},</span></div><div class="num" style="top:1609.10px;right:1134.5px">23</div><div class="ln" style="top:1609.10px;left:157.0px;letter-spacing:-0.729px"><span class="ind2"></span><span class="cyr">edition</span><span class="w">={2nd},</span></div><div class="num" style="top:1670.70px;right:1134.5px">24</div><div class="ln" style="top:1670.70px;left:157.0px"><span class="ind2"></span><span class="cyr">year</span><span class="w">={2015},</span></div><div class="num" style="top:1732.30px;right:1134.5px">25</div><div class="ln" style="top:1732.30px;left:157.0px"><span class="ind2"></span><span class="cyr">publisher</span><span class="w">={Westview Press},</span></div><div class="num" style="top:1793.90px;right:1134.5px">26</div><div class="ln" style="top:1793.90px;left:157.0px;letter-spacing:-1.712px"><span class="ind2"></span><span class="cyr">address</span><span class="w">={Boulder, CO}</span></div><div class="num" style="top:1855.50px;right:1134.5px">27</div><div class="ln" style="top:1855.50px;left:157.0px"><span class="w">}</span></div><div class="num" style="top:1917.10px;right:1134.5px">28</div><div class="num" style="top:1978.70px;right:1134.5px">29</div><div class="ln" style="top:1978.70px;left:157.0px"><span class="c">@book</span><span class="w">{landau1976mechanics,</span></div><div class="num" style="top:2040.30px;right:1134.5px">30</div><div class="ln" style="top:2040.30px;left:157.0px;letter-spacing:-0.494px"><span class="ind2"></span><span class="cyr">title</span><span class="w">={Mechanics},</span></div><div class="num" style="top:2101.90px;right:1134.5px">31</div><div class="ln" style="top:2101.90px;left:157.0px"><span class="ind2"></span><span class="cyr">author</span><span class="w">={Landau, Lev D. and Lifshitz, Evgeny M.},</span></div></div></div></div><div id="winborder"></div></body></html>
